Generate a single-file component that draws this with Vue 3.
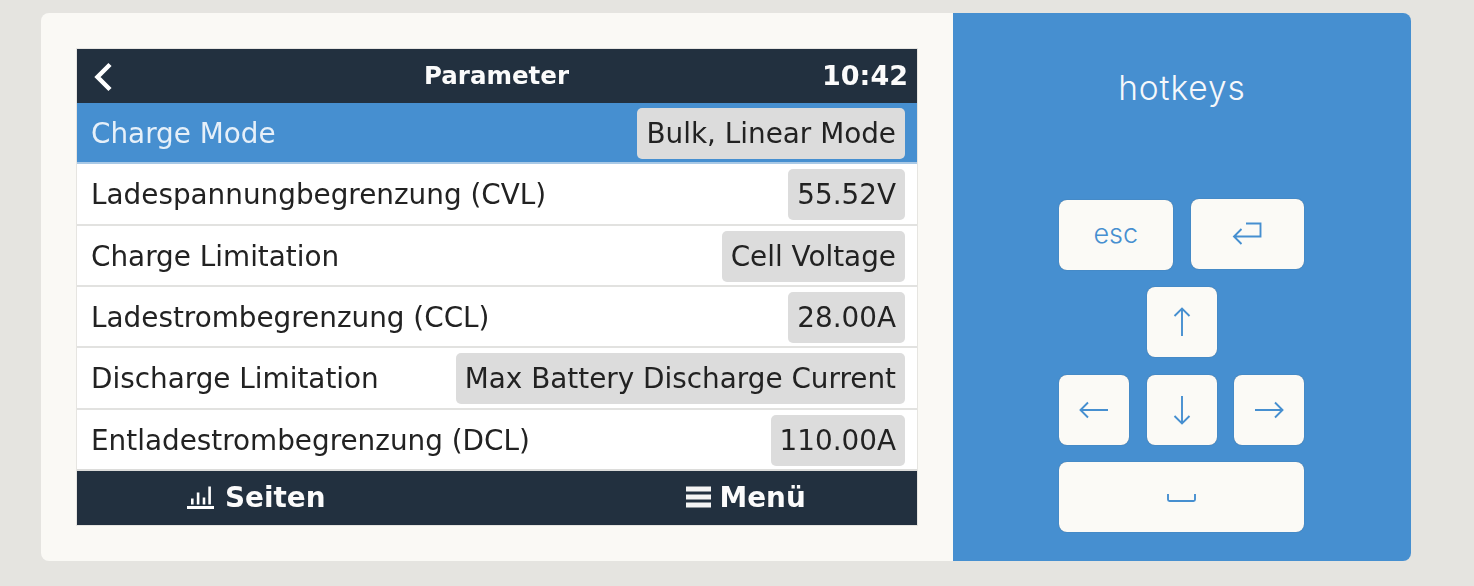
<script setup>
const rows = [
  { label: 'Charge Mode', value: 'Bulk, Linear Mode', active: true },
  { label: 'Ladespannungbegrenzung (CVL)', value: '55.52V' },
  { label: 'Charge Limitation', value: 'Cell Voltage' },
  { label: 'Ladestrombegrenzung (CCL)', value: '28.00A' },
  { label: 'Discharge Limitation', value: 'Max Battery Discharge Current' },
  { label: 'Entladestrombegrenzung (DCL)', value: '110.00A' }
]
</script>

<template>
  <div class="page">
    <div class="card">
      <section class="left">
        <div class="screen">
          <header class="bar top">
            <svg class="back" width="20" height="30" viewBox="0 0 20 30">
              <path d="M17 2.500 4.500 15 17 27.500" fill="none" stroke="#fff" stroke-width="4.500" />
            </svg>
            <span class="title">Parameter</span>
            <span class="clock">10:42</span>
          </header>
          <div class="list">
            <div v-for="r in rows" :key="r.label" class="row" :class="{ active: r.active }">
              <span class="label">{{ r.label }}</span>
              <span class="pill"><span class="pill-text">{{ r.value }}</span></span>
            </div>
          </div>
          <footer class="bar bottom">
            <div class="tab pages">
              <svg width="27" height="23" viewBox="0 0 27 23" fill="#fff">
                <rect x="0" y="20" width="27" height="3" />
                <rect x="4" y="12.500" width="2.600" height="6" />
                <rect x="9.800" y="6.500" width="2.600" height="12" />
                <rect x="15.700" y="11.500" width="2.600" height="7" />
                <rect x="21.300" y="0.500" width="2.600" height="18" />
              </svg>
              <span>Seiten</span>
            </div>
            <div class="tab menu">
              <svg width="25" height="22" viewBox="0 0 25 22" fill="#f4f4f4">
                <rect y="0.500" width="25" height="5" />
                <rect y="8.500" width="25" height="5" />
                <rect y="16.500" width="25" height="5" />
              </svg>
              <span>Menü</span>
            </div>
          </footer>
        </div>
      </section>
      <aside class="right">
        <h2 class="heading">hotkeys</h2>
        <div class="keys">
          <div class="keyrow first">
            <div class="key esc"><span class="esc-text">esc</span></div>
            <div class="key enter">
              <svg width="30" height="24" viewBox="0 0 30 24" fill="none" stroke="#468fd0" stroke-width="1.900">
                <path d="M14 1.500h14.500v13H2M9.500 7 2 14.500 9.500 22" />
              </svg>
            </div>
          </div>
          <div class="keyrow center">
            <div class="key square">
              <svg width="18" height="30" viewBox="0 0 18 30" fill="none" stroke="#468fd0" stroke-width="1.900">
                <path d="M9 29V1.500M1.500 9 9 1.500 16.500 9" />
              </svg>
            </div>
          </div>
          <div class="keyrow">
            <div class="key square">
              <svg width="30" height="18" viewBox="0 0 30 18" fill="none" stroke="#468fd0" stroke-width="1.900">
                <path d="M29 9H1.500M9 1.500 1.500 9 9 16.500" />
              </svg>
            </div>
            <div class="key square">
              <svg width="18" height="30" viewBox="0 0 18 30" fill="none" stroke="#468fd0" stroke-width="1.900">
                <path d="M9 1v27.500M1.500 21 9 28.500 16.500 21" />
              </svg>
            </div>
            <div class="key square">
              <svg width="30" height="18" viewBox="0 0 30 18" fill="none" stroke="#468fd0" stroke-width="1.900">
                <path d="M1 9h27.500M21 1.500 28.500 9 21 16.500" />
              </svg>
            </div>
          </div>
          <div class="key space">
            <svg width="29" height="9" viewBox="0 0 29 9" fill="none" stroke="#468fd0" stroke-width="1.900">
              <path d="M1 1v5.500q0 1.500 1.500 1.500h24q1.500 0 1.500-1.500V1" />
            </svg>
          </div>
        </div>
      </aside>
    </div>
  </div>
</template>

<style>
html, body { margin: 0; background: #e5e4e0; }
</style>

<style scoped>
.page {
  width: 1474px;
  height: 586px;
  box-sizing: border-box;
  padding: 13px 63px 25px 41px;
  background: #e5e4e0;
}
.card {
  display: flex;
  height: 548px;
  border-radius: 8px;
  overflow: hidden;
}
.left {
  width: 912px;
  box-sizing: border-box;
  padding: 36px;
  background: #faf9f5;
}
.screen {
  display: flex;
  flex-direction: column;
  width: 840px;
  height: 476px;
  background: #fff;
  outline: 1px solid #e6e5e1;
  font-family: "DejaVu Sans", sans-serif;
  color: #222;
}
.bar {
  flex: none;
  box-sizing: border-box;
  height: 54px;
  padding-bottom: 2px;
  background: #22303f;
  color: #fbfbfb;
  font-weight: 700;
  display: flex;
  align-items: center;
}
.top {
  position: relative;
  justify-content: space-between;
  padding-left: 16px;
  padding-right: 9px;
}
.back {
  flex: none;
  margin-top: 4px;
}
.title {
  position: absolute;
  left: 347px;
  font-size: 24.500px;
  filter: blur(0.3px);
}
.clock {
  font-size: 27px;
  filter: blur(0.3px);
}
.list {
  flex: 1;
  display: flex;
  flex-direction: column;
}
.row {
  flex: 1;
  display: flex;
  align-items: center;
  justify-content: space-between;
  box-sizing: border-box;
  padding: 2px 12px 0 14px;
  border-bottom: 2px solid #e2e2e0;
  font-size: 27.850px;
}
.row:last-child { border-bottom-color: #dcdcda; }
.row.active {
  background: #468fd0;
  border-bottom-color: #a9c9e6;
  color: #e6f0f9;
}
.label {
  white-space: nowrap;
  filter: blur(0.3px);
}
.pill {
  display: flex;
  align-items: center;
  height: 51px;
  padding: 0 9px;
  border-radius: 5px;
  background: #dcdcdc;
  color: #222;
  white-space: nowrap;
}
.pill-text { filter: blur(0.3px); }
.bottom { font-size: 27.850px; }
.tab {
  display: flex;
  align-items: center;
  gap: 11px;
}
.tab span { filter: blur(0.3px); }
.pages { margin-left: 110px; }
.menu { margin-left: 360px; gap: 9px; }
.right {
  flex: 1;
  display: flex;
  flex-direction: column;
  align-items: center;
  background: #468fd0;
}
.heading {
  margin: 53px 0 0;
  color: #f5f8fb;
  font-family: Inter, sans-serif;
  font-size: 33.500px;
  font-weight: 300;
  letter-spacing: 0.900px;
  line-height: 44px;
}
.keys {
  display: flex;
  flex-direction: column;
  gap: 18px;
  width: 245px;
  margin: 89px 1px 0 0;
}
.keyrow {
  display: flex;
  justify-content: space-between;
}
.keyrow.center { justify-content: center; }
.keyrow.first { gap: 18px; }
.key {
  display: flex;
  align-items: center;
  justify-content: center;
  box-sizing: border-box;
  height: 70px;
  border-radius: 8px;
  background: #fbfaf6;
  box-shadow: 0 0 1px rgba(60, 60, 60, .55);
  color: #468fd0;
  font-family: Inter, sans-serif;
  font-size: 27px;
  font-weight: 300;
}
.esc, .enter { flex: 1; }
.esc { margin: 1px 0 -1px; }
.esc-text { margin-bottom: 4px; }
.square { width: 70px; }
.space {
  width: 245px;
  margin-top: -1px;
}
</style>
